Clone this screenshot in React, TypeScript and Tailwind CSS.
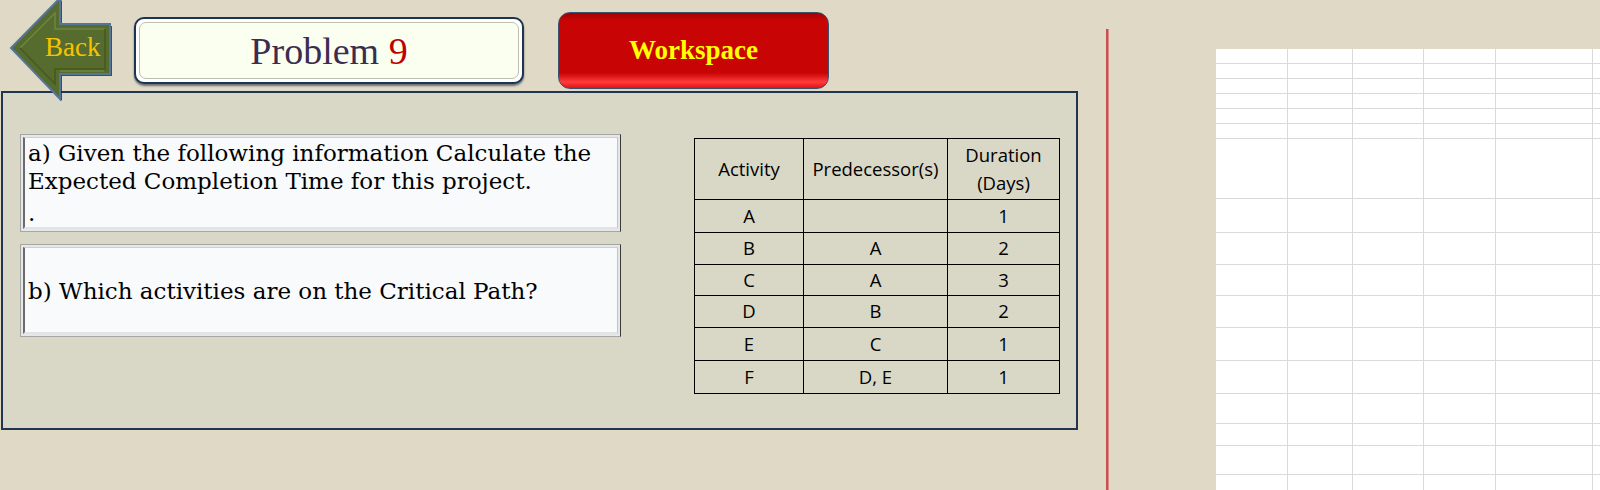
import React from "react";

const tableRows: [string, string, string, string][] = [
  ["A", "", "1", "h-[33px]"],
  ["B", "A", "2", "h-[32px]"],
  ["C", "A", "3", "h-[31px]"],
  ["D", "B", "2", "h-[32px]"],
  ["E", "C", "1", "h-[33px]"],
  ["F", "D, E", "1", "h-[33px]"],
];

// spreadsheet grid on the right
const gridRows = [
  "h-[15px]", "h-[15px]", "h-[15px]", "h-[15px]", "h-[15px]", "h-[15px]",
  "h-[60px]", "h-[34px]", "h-[32px]", "h-[31px]", "h-[32px]", "h-[33px]",
  "h-[33px]", "h-[30px]", "h-[22px]", "h-[29px]", "h-[20px]",
];
const gridCols = ["w-[72px]", "w-[65px]", "w-[71px]", "w-[72px]", "w-[97px]"];

function BackArrow() {
  return (
    <div className="relative w-[112px] h-[91px] shrink-0 z-10">
      <svg width="114" height="104" viewBox="0 -2 114 104" className="absolute left-0 top-[-2px] overflow-visible">
        {/* shadow */}
        <polygon points="13,49 62,0 62,26 112,26 112,76 62,76 62,101" fill="#1e2a33" opacity="0.8" />
        <polygon
          points="11,48 60,-2 60,24 110,24 110,74 60,74 60,99"
          fill="#566b2e"
          stroke="#55769a"
          strokeWidth="2"
          strokeLinejoin="miter"
        />
        <polyline points="20,48 55,13 55,29 105,29" fill="none" stroke="#6f8540" strokeWidth="1.5" />
        <polyline points="20,48 55,84 55,69 105,69 105,29" fill="none" stroke="#46581f" strokeWidth="1.5" />
        <line x1="60" y1="71" x2="104" y2="71" stroke="#7d9448" strokeWidth="1" />
      </svg>
      <span className="absolute left-[45px] top-[34px] text-[27px] leading-none text-[#f5c400] font-['Liberation_Serif',serif]">
        Back
      </span>
    </div>
  );
}

function QuestionBox({ className, children }: { className: string; children: React.ReactNode }) {
  return (
    <div className={`w-[601px] border border-[#a6a6a6] border-r-[#3a3a3a] bg-[#e6e7e9] p-[2px] ${className}`}>
      <div className="h-full border-l-2 border-l-[#6b6b6b] border-t border-t-[#cfcfcf] border-b-2 border-b-[#e2e3e5] border-r border-r-[#c4c4c4] bg-[#f9fafc] pl-[3px] font-['DejaVu_Serif',serif] text-[23px] leading-[28px] text-black">
        {children}
      </div>
    </div>
  );
}

export default function App() {
  return (
    <div className="w-[1600px] h-[490px] bg-[#dfd9c6] flex overflow-hidden">
      {/* left area */}
      <div className="w-[1080px] shrink-0 flex flex-col">
        <div className="h-[91px] flex items-start">
          <BackArrow />
          <div className="ml-[22px] mt-[17px] w-[390px] h-[67px] rounded-[10px] border-2 border-[#1d3452] bg-white p-[3px] shadow-[0_2px_2px_rgba(20,30,50,0.55)]">
            <div className="h-full rounded-[7px] border border-[#bdbdb0] bg-[#fbfff0] flex items-center justify-center pt-[1px] font-['Liberation_Serif',serif] text-[38px] leading-none text-[#3b2d4f]">
              Problem&nbsp;<span className="text-[#c00000]">9</span>
            </div>
          </div>
          <div className="ml-[34px] mt-[12px] w-[271px] h-[77px] rounded-[12px] border-[1.5px] border-[#3c5070] bg-[linear-gradient(to_bottom,#a40000_0%,#c80404_10%,#c80404_80%,#ff3b3b_92%,#e21414_100%)] flex items-center justify-center font-['Liberation_Serif',serif] font-bold text-[27px] text-[#ffff00]">
            Workspace
          </div>
        </div>

        <div className="ml-[1px] w-[1077px] h-[339px] border-2 border-[#1f3550] bg-[#d9d7c5] flex items-start pl-[17px] pt-[41px]">
          <div className="flex flex-col gap-[12px]">
            <QuestionBox className="h-[98px]">
              <div className="pt-[1px]">
                a) Given the following information Calculate the
                <br />
                Expected Completion Time for this project.
                <div className="mt-[4px]">.</div>
              </div>
            </QuestionBox>
            <QuestionBox className="h-[93px]">
              <div className="h-full flex items-center pt-[1px]">b) Which activities are on the Critical Path?</div>
            </QuestionBox>
          </div>

          <table className="ml-[73px] mt-[4px] w-[365px] table-fixed border-collapse font-['Open_Sans',sans-serif] text-[18.5px] text-black">
            <colgroup>
              <col className="w-[109px]" />
              <col className="w-[144px]" />
              <col className="w-[112px]" />
            </colgroup>
            <thead>
              <tr className="h-[61px]">
                <th className="border border-black font-normal p-0">Activity</th>
                <th className="border border-black font-normal p-0">Predecessor(s)</th>
                <th className="border border-black font-normal p-0 leading-[28px]">
                  Duration
                  <br />
                  (Days)
                </th>
              </tr>
            </thead>
            <tbody>
              {tableRows.map(([a, p, d, h]) => (
                <tr key={a} className={h}>
                  <td className="border border-black text-center p-0 leading-none">{a}</td>
                  <td className="border border-black text-center p-0 leading-none">{p}</td>
                  <td className="border border-black text-center p-0 leading-none">{d}</td>
                </tr>
              ))}
            </tbody>
          </table>
        </div>
      </div>

      {/* divider */}
      <div className="ml-[26px] mt-[29px] w-[3px] h-[461px] bg-[#c4524f] border-r border-r-[#d98a86] shrink-0" />

      {/* sheet */}
      <div className="ml-[107px] mt-[49px] flex-1 bg-white flex flex-col">
        {gridRows.map((h, i) => (
          <div key={i} className={`flex shrink-0 border-b border-[#dadada] ${h}`}>
            {gridCols.map((w, j) => (
              <div key={j} className={`h-full border-r border-[#dadada] ${w}`} />
            ))}
            <div className="flex-1" />
          </div>
        ))}
      </div>
    </div>
  );
}
